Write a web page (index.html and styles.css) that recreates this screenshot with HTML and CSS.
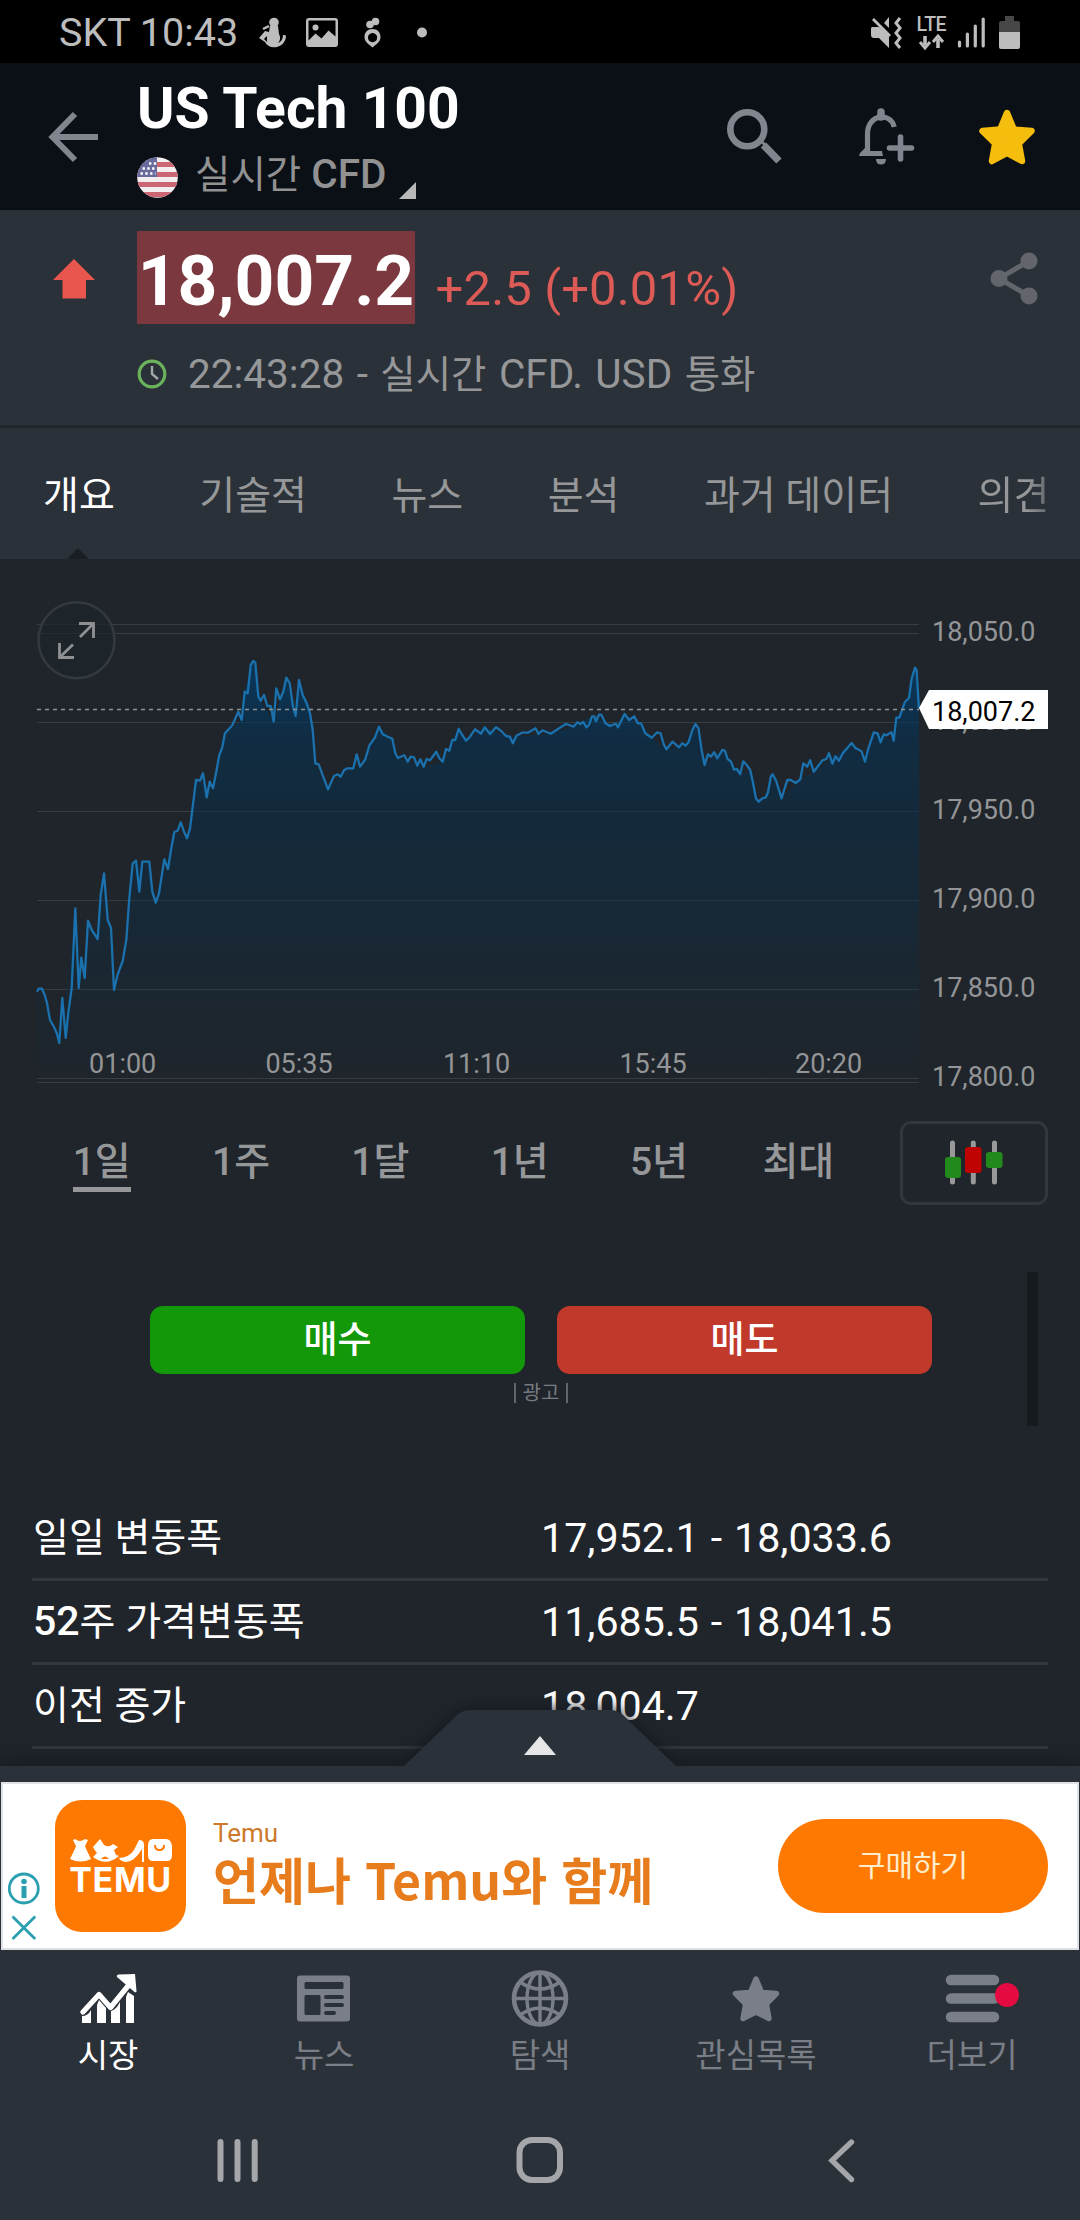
FILE: index.html
```html
<!DOCTYPE html>
<html lang="ko">
<head>
<meta charset="utf-8">
<title>US Tech 100</title>
<link rel="stylesheet" href="styles.css">
</head>
<body>
<div class="statusbar">
  <span class="carrier">SKT 10:43</span>
  <svg class="status-left" viewBox="256 10 176 42" width="176" height="42">
    <g fill="#bdbdbd">
      <circle cx="274" cy="21.500" r="4.800"/>
      <path d="M270 25h8l1 8c2 4 1 7-1 9 3-1 5-4 5-8 2 0 3 0 3 2-1 6-5 9-9 10-6 1-10-1-12-5l-6-4 6-7 4 1z"/>
      <path d="M263 28l6-3" stroke="#bdbdbd" stroke-width="2.500"/>
      <path d="M264 38l3-3v6z" fill="#000"/>
      <path fill-rule="evenodd" d="M309 17h26q3 0 3 3v23q0 3-3 3h-26q-3 0-3-3v-23q0-3 3-3zM308.500 19.500v20l7-7 6 5 7-8 7 6v-16z"/>
      <circle cx="315.500" cy="26.500" r="3"/>
      <circle cx="370" cy="23.500" r="3.800"/><circle cx="375.500" cy="20.500" r="3.800"/>
      <path fill-rule="evenodd" d="M372.500 28c5 0 8 3.500 8 8 0 5-4 7-8 10.500-4-3.500-8-5.500-8-10.500 0-4.500 3-8 8-8zM372.500 32a4.600 4.600 0 1 0 .1 0z"/>
      <circle cx="422" cy="31.500" r="5"/>
    </g>
  </svg>
  <svg class="status-right" viewBox="868 10 156 42" width="156" height="42">
    <g fill="#bdbdbd">
      <path d="M872 26h7l10 8v13l-10-10h-5q-3 0-3-3v-6q0-2 1-2zM884 22l5-6v11z"/>
      <path d="M873 18l17 17" stroke="#bdbdbd" stroke-width="2.800"/>
      <path d="M900 17l-4 5 4 5-4 5 4 5-4 5 4 5" fill="none" stroke="#bdbdbd" stroke-width="3"/>
      <path d="M925 35v9M938 47v-9" stroke="#bdbdbd" stroke-width="3.600"/>
      <path d="M920 41l5 6 5-6M933 41l5-6 5 6" fill="none" stroke="#bdbdbd" stroke-width="3"/>
      <path d="M959.500 41v4M967.400 33v12M975.300 25v20M983.200 18v27" stroke="#bdbdbd" stroke-width="3.200" stroke-linecap="round"/>
      <path fill="#474747" d="M1005 15h9v5h4q2 0 2 2v9h-21v-9q0-2 2-2h4z"/>
      <path d="M999 31h21v15q0 2-2 2h-17q-2 0-2-2z"/>
    </g>
    <text x="916.500" y="30" class="lte">LTE</text>
  </svg>
</div>

<header class="appbar">
  <svg class="back" viewBox="46 108 54 58" width="54" height="58"><path d="M98 137H53M75 114L52.500 137L75 160" fill="none" stroke="#80858e" stroke-width="6"/></svg>
  <div class="heading">
    <h1>US Tech 100</h1>
    <div class="sub">
      <svg class="flag" viewBox="0 0 41 41" width="41" height="41">
        <clipPath id="fc"><circle cx="20.500" cy="20.500" r="20.300"/></clipPath>
        <g clip-path="url(#fc)">
          <path fill="#f3eef0" d="M0 0h41v41H0z"/>
          <path stroke="#cb6673" stroke-width="5" d="M0 7.500h41M0 17.500h41M0 27.500h41M0 37.500h41"/>
          <path fill="#686b9b" d="M0 0h20v20H0z"/>
          <path stroke="#fff" stroke-width="2.400" stroke-dasharray="2.400 2.400" d="M12 6.500h8M5.500 11.500h14M3.500 16.500h15"/>
        </g>
      </svg>
      <span class="cfd"><span class="ko">실시간</span> CFD</span>
      <svg class="corner" viewBox="0 0 17 17" width="17" height="17"><path fill="#b9b9b9" d="M17 0v17H0z"/></svg>
    </div>
  </div>
  <svg class="actions" viewBox="724 104 316 64" width="316" height="64">
    <circle cx="747.300" cy="129.300" r="17" fill="none" stroke="#80858e" stroke-width="6.600"/>
    <path d="M763.500 145L779 161" stroke="#80858e" stroke-width="7.500"/>
    <path d="M761 141l5 5" stroke="#80858e" stroke-width="3"/>
    <g fill="none" stroke="#80858e" stroke-width="5.200">
      <path d="M867.500 153V134C867.500 113.500 891 112 894.200 127"/>
      <path d="M881 112v5" stroke-width="7.500" stroke-linecap="round"/>
      <path d="M900.500 137v22M889.500 148h22" stroke-linecap="round" stroke-width="5.600"/>
    </g>
    <path fill="#80858e" d="M865 148l3 3h14l1 5h-24q0-3 3-5zM876 159h10q0 5.500-5 5.500t-5-5.500z"/>
    <path d="M1007 113L1013.800 129.500 1031.500 131 1018.800 143.500 1022 161 1007 153 992 161 995.200 143.500 982.500 131 1000.200 129.500z" fill="#f5bd0d" stroke="#f5bd0d" stroke-width="6.500" stroke-linejoin="round"/>
  </svg>
</header>

<section class="quote">
  <svg class="up" viewBox="0 0 42 40" width="42" height="40"><path fill="#e8564d" d="M21 0L42 21H33V39.500H9.500V21H0z"/></svg>
  <div class="quote-main">
    <div class="price-line"><span class="price">18,007.2</span><span class="change">+2.5 (+0.01%)</span></div>
    <div class="meta">
      <svg viewBox="0 0 30 30" width="30" height="30"><circle cx="15" cy="15" r="12.800" fill="none" stroke="#6bb25c" stroke-width="3.200"/><path d="M15 7v8l6 5" fill="none" stroke="#a3a8a8" stroke-width="2.400"/></svg>
      <span>22:43:28 - <span class="ko">실시간</span> CFD. USD <span class="ko">통화</span></span>
    </div>
  </div>
  <svg class="share" viewBox="988 252 52 54" width="52" height="54"><g fill="#62666c"><path d="M1028 261L998 278.500 1028 296" fill="none" stroke="#62666c" stroke-width="5"/><circle cx="998" cy="278.500" r="8.500"/><circle cx="1028" cy="261" r="8.500"/><circle cx="1028" cy="296" r="8.500"/></g></svg>
</section>

<nav class="tabs">
  <span class="active">개요</span><span>기술적</span><span>뉴스</span><span>분석</span><span>과거 데이터</span><span>의견</span>
</nav>

<svg class="chart" viewBox="0 559 1080 541" width="1080" height="541">
  <defs>
    <linearGradient id="area" gradientUnits="userSpaceOnUse" x1="0" y1="661" x2="0" y2="1078">
      <stop offset="0" stop-color="#003e6e" stop-opacity=".75"/>
      <stop offset=".2" stop-color="#08304f" stop-opacity=".62"/>
      <stop offset=".6" stop-color="#0c2c44" stop-opacity=".42"/>
      <stop offset="1" stop-color="#0c2c44" stop-opacity="0"/>
    </linearGradient>
  </defs>
  <path class="grid" d="M37 624.500H919M37 633.500H919M37 722.500H919M37 811.500H919M37 900.500H919M37 989.500H919M37 1078.500H919M37 1082.500H919"/>
  <path fill="url(#area)" d="M37 1078V991.700L42 988.700L59.300 1043L75.300 908.300L84.700 978L88 920.700L97.700 939L104 873.300L114 990L122.700 961L126.300 940L132.700 863.300L149.300 861.700L155.700 902.700L174.300 832L187 838.300L192.700 806.700L196 780L213 788.300L225 733.300L241.700 720L244.700 691.700L253.300 661L258.300 696.700L273.700 721.700L286.300 677.700L295.700 716L299 680L310 713.300L315.300 763.300L328 789.300L344 770.300L360 766.700L379 726.700L392.300 738.700L398 758L423.700 766.700L442.700 761.700L458.700 728.700L466 740.700L484.700 727.300L509.800 736.700L550.800 733.700L573.400 726.700L592 716.300L618 727.300L624.600 714L637.700 723.300L651.800 737.700L666.400 749.300L685.500 745.700L695.400 724L704.600 765L722.600 749.700L740.200 774L750.200 770L758.600 801.700L765.800 797.300L772.700 774.300L781.500 798.300L800.300 779.300L813.700 771.700L851.600 743L865 761.700L873.800 732.300L893.700 740.700L896.300 717.700L909 698L915 667.700L918.900 708.300V1078z"/>
  <path class="line" d="M37 991.700L38.700 988.700 42 988.700 44.700 995 47 1003 50 1020 54 1027 56.700 1033 59.300 1043 62.300 998 65.700 1038 68.300 1013 71.700 988 75.300 908.300 78.700 988 81.300 957.700 84.700 978 88 920.700 91.700 930 97.700 939 100.700 895 104 873.300 107.700 920 111 928 114 990 117.700 974.300 122.700 961 126.300 940 129.300 898.300 132.700 863.300 136 860.700 139.300 891.700 142.300 861.700 149.300 861.700 152.300 891.700 155.700 902.700 159 893.300 164.300 859.300 168 869 171 850 174.300 832 177.700 830.700 180.700 822.300 184 831.700 187 838.300 190 828.300 192.700 806.700 196 780 200 780.700 203 773.300 206.700 797.300 209.700 781.700 213 788.300 216 773.300 219.300 755 222 748.300 225 733.300 232.300 725.300 238.300 711.700 241.700 720 244.700 691.700 247.700 693.300 250.700 665 253.300 661 255.300 662.700 258.300 696.700 260.700 700.700 264 695 267.300 706 270.700 706 273.700 721.700 276.300 688.300 280 699.300 283.300 691.700 286.300 677.700 289.700 683.300 293 706.700 295.700 716 299 680 302.700 695 306.700 703.300 310 713.300 312.700 730 315.300 763.300 318.700 764.300 322 773.300 328 789.300 334 776 337.700 774.300 340.700 776.700 344 770.300 347.300 768.300 353.300 768.300 356.700 754.300 360 766.700 365.300 759.300 369.300 745.700 375 737.300 379 726.700 382.700 734.300 387.700 736.700 392.300 738.700 395.300 753.300 398 758 404.300 755.300 407.700 761.700 410.700 756.700 414 757.300 417.300 765.700 420.300 759.300 423.700 766.700 426.700 759 430 760.300 436.300 751.700 439.300 758.300 442.700 761.700 446 749 449.300 750.700 452.300 740 455.300 740 458.700 728.700 462 734.700 466 740.700 470 736.700 475 729.300 481 733.700 484.700 727.300 490 734 496 727.300 501 730.700 506 736 509.800 736.700 512.900 743.300 516.400 735.700 522 732.700 527.800 732.700 535.500 728.300 538.500 734 542.400 730.300 550.800 733.700 558.400 728.700 566 724 573.400 726.700 577.600 722.300 580.300 724 583.300 722 586.400 727.300 589 725 592 716.300 594.400 716.300 596 721.300 599 714.700 601.300 714.700 605.500 723.300 610 726 615.800 723.700 618 727.300 624.600 714 629.200 720 634.200 716.300 637.700 723.300 641 723.300 645.300 733.300 651.800 737.700 657.200 732.300 660.600 733.300 663.700 744.300 666.400 749.300 672.500 741.700 679 747.300 682.400 743.300 685.500 745.700 688.500 742.300 692.400 730 695.400 724 698.500 728.300 701.600 750 704.600 765 708 754.300 711 756.700 714.200 752.300 717.200 758.300 722.600 749.700 724.900 750.700 727.600 759 731 761.700 734 769.700 736.800 769 740.200 774 743.300 761.300 746.700 765 750.200 770 752.800 781.700 755.900 798.300 758.600 801.700 762.400 798.300 765.800 797.300 768 792.300 770.800 776.700 772.700 774.300 776.200 781 781.500 798.300 787.300 780 790.700 780 795.700 783 800.300 779.300 803.300 763.300 807.200 766.700 810.200 760.300 813.700 771.700 822.500 760.300 826.300 759 829 753.300 832.400 763.700 835.500 756.300 838.900 760.700 842.800 753.300 851.600 743 855.400 748 861.500 751.300 865 761.700 868.400 748.300 873.800 732.300 877.600 733.300 880.600 742.300 883.700 734.300 886.400 735.300 891.400 732.300 893.700 740.700 896.300 717.700 899.400 717.700 904.800 702 909 698 911.600 679 915 667.700 916.600 670 918.900 708.300"/>
  <path d="M37 709.500H919" stroke="#8f9295" stroke-width="1.300" stroke-dasharray="4 4"/>
  <g class="axis">
    <text x="932" y="641">18,050.0</text>
    <text x="932" y="730">18,000.0</text>
    <text x="932" y="819">17,950.0</text>
    <text x="932" y="908">17,900.0</text>
    <text x="932" y="997">17,850.0</text>
    <text x="932" y="1086">17,800.0</text>
    <g text-anchor="middle">
      <text x="122.700" y="1073">01:00</text>
      <text x="299" y="1073">05:35</text>
      <text x="476.500" y="1073">11:10</text>
      <text x="653" y="1073">15:45</text>
      <text x="828.600" y="1073">20:20</text>
    </g>
  </g>
  <path fill="#fff" d="M919 708L929 690H1048V729H929z"/>
  <text class="tag" x="932" y="721">18,007.2</text>
  <circle cx="76.500" cy="640.300" r="38" fill="#1f252b" fill-opacity=".75" stroke="#343840" stroke-width="2.600"/>
  <path d="M79 623.500H93.500V638M93.500 623.500L80 637M59.500 643V657.500H74M59.500 657.500L73 644.500" fill="none" stroke="#8f9092" stroke-width="2.800"/>
</svg>

<div class="periods">
  <div class="period-list">
    <span><b>1일</b></span><span>1주</span><span>1달</span><span>1년</span><span>5년</span><span>최대</span>
  </div>
  <div class="candle-btn">
    <svg viewBox="944 1140 60 46" width="60" height="46">
      <path d="M952.500 1143v39M973.300 1143v39M994.500 1143v39" stroke="#999" stroke-width="5" stroke-linecap="round"/>
      <rect x="945" y="1157" width="16" height="21" rx="3" fill="#228a1d"/><rect x="965" y="1147" width="16.500" height="26" rx="3" fill="#bf0303"/><rect x="986" y="1152" width="16.500" height="16" rx="3" fill="#228a1d"/>
    </svg>
  </div>
</div>

<section class="trade">
  <div class="trade-body">
    <div class="trade-buttons"><span class="buy">매수</span><span class="sell">매도</span></div>
    <div class="sponsored"><i></i><span>광고</span><i></i></div>
  </div>
  <div class="thumb"></div>
</section>

<section class="facts">
  <div class="fact"><span>일일 변동폭</span><span class="num">17,952.1 - 18,033.6</span></div>
  <div class="fact"><span><b>52</b>주 가격변동폭</span><span class="num">11,685.5 - 18,041.5</span></div>
  <div class="fact"><span>이전 종가</span><span class="num">18,004.7</span></div>
</section>

<footer class="bottom">
  <svg class="handle" viewBox="380 1690 320 77" width="320" height="77">
    <path d="M403 1767L457 1715Q463 1710 470 1710H610Q617 1710 623 1715L677 1767z" fill="#2b3138"/>
    <path d="M540 1736L556 1755H524z" fill="#e6e6e6"/>
  </svg>
  <div class="ad">
    <svg class="adinfo" viewBox="6 1870 34 74" width="34" height="74">
      <g fill="none" stroke="#2b9fb0" stroke-width="2.800"><circle cx="23.800" cy="1888.500" r="14.500"/><path d="M12.500 1916.500L35.200 1939M35.200 1916.500L12.500 1939"/></g>
      <path d="M21.500 1886h5v12h-5z" fill="#2b9fb0"/><circle cx="24" cy="1881.500" r="2.800" fill="#2b9fb0"/>
    </svg>
    <div class="temu">
      <svg viewBox="69 1838 104 24" width="104" height="24">
        <g fill="#fff">
          <path d="M75 1839q5 4 10 0l3 1-3 6q1 3 6 13-10 5-21 0 5-10 6-13l-3-6z"/>
          <path d="M93 1847l7-8 4 6q5 3 9-1l5 3-4 3 2 5 3 1q-13 11-26 1l4-4-3-4zM101 1859q4-5 8 0z" fill-rule="evenodd"/>
          <path d="M119 1858q11-1 15-8l5-10q5 0 5 5v17h-2v-13q-8 13-16 13-6-1-7-4z"/>
          <path fill-rule="evenodd" d="M153 1839h13q5 0 6 7v9q0 6-5 6h-14q-5 0-5-6v-9q0-7 5-7zM154 1845q0 6 5.500 6t5.500-6h-2q0 4-3.500 4t-3.500-4z"/>
        </g>
      </svg>
      <strong>TEMU</strong>
    </div>
    <div class="adcopy"><small>Temu</small><p>언제나 Temu와 함께</p></div>
    <span class="cta">구매하기</span>
  </div>
  <nav class="nav">
    <div class="item on">
      <svg viewBox="-30 0 60 60" width="60" height="60"><path d="M-25 42L-9 24.500 2.500 37.500 20 16" fill="none" stroke="#fff" stroke-width="5.200" stroke-linecap="round" stroke-linejoin="round"/><path fill="#fff" d="M9 7q-1-2 2-2.500l16-.5 1.500 17q0 2-2 1l-7-6zM-26 46q6 0 9-6v13h-9zM-11 35l2-5 7 8v15h-9zM3 41q5-1 9-9v21h-9zM18 27l2-5 6 4v27h-8z"/></svg>
      <span>시장</span>
    </div>
    <div class="item">
      <svg viewBox="-30 0 60 60" width="60" height="60"><path fill="#7a7e86" fill-rule="evenodd" d="M-24 5.500h47q3 0 3 3v40q0 3-3 3h-47q-3 0-3-3v-40q0-3 3-3zM-18 12q-1.500 0-1.500 1.500v4q0 1.500 1.500 1.500h36q1.500 0 1.500-1.500v-4q0-1.500-1.500-1.500zM-18 25q-1.500 0-1.500 1.500v17q0 1.500 1.500 1.500h13q1.500 0 1.500-1.500v-17q0-1.500-1.500-1.500zM2 25q-2 0-2 2t2 2h16q2 0 2-2t-2-2zM2 33q-2 0-2 2t2 2h16q2 0 2-2t-2-2zM2 41q-2 0-2 2t2 2h8q2 0 2-2t-2-2z"/></svg>
      <span>뉴스</span>
    </div>
    <div class="item">
      <svg viewBox="-30 0 60 60" width="60" height="60"><g fill="none" stroke="#7a7e86" stroke-width="3.400"><circle cx="0" cy="28.500" r="26" stroke-width="4.600"/><ellipse cx="0" cy="28.500" rx="13" ry="26"/><path d="M0 2v53M-26 28.500h52M-20 12q20 14 40 0M-20 45q20-14 40 0"/></g></svg>
      <span>탐색</span>
    </div>
    <div class="item">
      <svg viewBox="-30 0 60 60" width="60" height="60"><path d="M0 9L5.600 22.500 20.500 23.500 10.300 34 13 48.500 0 42-13 48.500-10.300 34-20.500 23.500-5.600 22.500z" fill="#7a7e86" stroke="#7a7e86" stroke-width="5.500" stroke-linejoin="round"/></svg>
      <span>관심목록</span>
    </div>
    <div class="item">
      <svg viewBox="-30 0 80 60" width="80" height="60" class="more"><path d="M-21 10h43M-21 28.500h43M-21 47h43" stroke="#7a7e86" stroke-width="10.500" stroke-linecap="round"/><circle cx="35" cy="25" r="12" fill="#e30b41"/></svg>
      <span>더보기</span>
    </div>
  </nav>
  <div class="system">
    <svg viewBox="0 2130 1080 60" width="1080" height="60"><g fill="none" stroke="#a4a6aa" stroke-width="6" stroke-linecap="round"><path d="M220.500 2142v37M237.500 2142v37M254.700 2142v37"/><rect x="519.500" y="2140" width="40.500" height="40" rx="12.500"/><path d="M851.500 2142L832 2160.500 851.500 2179.500" stroke-width="5.400"/></g></svg>
  </div>
</footer>
</body>
</html>
```
FILE: styles.css
```css
* { box-sizing: border-box; }
body {
  margin: 0;
  width: 1080px;
  height: 2220px;
  overflow: hidden;
  display: flex;
  flex-direction: column;
  background: #1f252b;
  color: #969799;
  font-family: Roboto, "Noto Sans CJK KR", sans-serif;
  font-size: 39px;
  line-height: 48px;
}
svg { display: block; flex: none; }
.ko { font-size: .95em; line-height: 1; }

.statusbar { height: 63px; background: #000; display: flex; align-items: center; padding: 0 56px 0 59px; color: #bdbdbd; }
.carrier { width: 197px; white-space: nowrap; padding-top: 2px; font-size: 39.500px; }
.status-right { margin-left: auto; }
.lte { font-size: 19.500px; font-weight: 500; fill: #bdbdbd; letter-spacing: -.5px; }

.appbar { height: 147px; background: #0b1017; display: flex; padding: 0 40px 0 46px; }
.back { margin-top: 45px; }
.heading { margin-left: 37px; padding-top: 14px; }
.heading h1 { margin: 0; font-size: 57px; line-height: 64px; font-weight: 700; color: #fff; white-space: nowrap; }
.sub { display: flex; margin-top: 8px; height: 50px; }
.flag { margin-top: 8px; }
.cfd { margin-left: 17px; font-size: 40.500px; font-weight: 500; line-height: 50px; white-space: nowrap; color: #929292; }
.cfd .ko { font-weight: 400; }
.corner { margin: 33px 0 0 13px; }
.actions { margin: 41px 0 0 auto; }

.quote { height: 218px; flex: none; background: #2b3138; border-bottom: 3px solid #20262c; display: flex; padding: 21px 39px 0 53px; }
.up { margin-top: 28px; }
.quote-main { margin-left: 42px; white-space: nowrap; }
.price-line { display: flex; align-items: baseline; }
.price { background: #7b393f; color: #fff; font-weight: 700; font-size: 69.500px; line-height: 85px; padding: 8px 0 0; width: 278px; text-align: center; }
.change { margin-left: 20.500px; color: #dc5b57; font-size: 49px; letter-spacing: .15px; }
.meta { display: flex; align-items: center; gap: 21px; margin-top: 26px; font-size: 40.500px; word-spacing: 2.400px; }
.share { margin: 21px 0 0 auto; }

.tabs { position: relative; height: 131px; background: #2b3138; display: flex; gap: 84.500px; align-items: center; padding: 4px 32px 0 43px; white-space: nowrap; overflow: hidden; }
.tabs span:last-child { -webkit-mask-image: linear-gradient(90deg, #000 70%, rgba(0,0,0,.5)); mask-image: linear-gradient(90deg, #000 70%, rgba(0,0,0,.5)); }
.tabs .active { color: #fff; }
.tabs::after { content: ""; position: absolute; left: 67px; bottom: 0; border: 11px solid transparent; border-top: 0; border-bottom-color: #1a1e24; }

.grid { stroke: #363d43; stroke-width: 1.200; fill: none; }
.line { fill: none; stroke: #1a71ad; stroke-width: 2.300; stroke-linejoin: round; }
.axis text { font-size: 27px; fill: #949597; }
.tag { font-size: 27px; fill: #000; }

.periods { display: flex; height: 105px; padding: 21px 32px 0; }
.period-list { width: 836px; display: flex; }
.period-list span { flex: 1; text-align: center; line-height: 48px; padding-top: 17px; font-weight: 500; }
.period-list b { display: inline-block; height: 54px; border-bottom: 5px solid #969799; font-weight: 500; }
.candle-btn { width: 148px; margin-left: 32px; height: 84px; border: 3px solid #32373e; border-radius: 11px; display: flex; align-items: center; justify-content: center; }

.trade { display: flex; margin: 67px 42px 0 150px; height: 154px; justify-content: space-between; }
.trade-body { width: 782px; padding-top: 34px; }
.trade-buttons { display: flex; gap: 32px; }
.trade-buttons span { flex: 1; height: 68px; line-height: 70px; border-radius: 13px; text-align: center; color: #fff; font-size: 37px; font-weight: 500; }
.buy { background: #139809; }
.sell { background: #c0392b; }
.sponsored { display: flex; justify-content: center; align-items: center; gap: 7px; font-size: 20px; line-height: 20px; margin-top: 9px; color: #777b80; }
.sponsored i { width: 2px; height: 20px; background: #62666b; }
.thumb { width: 11px; background: #16191e; }

.facts { margin: 71px 32px 0; }
.fact { display: grid; grid-template-columns: 508px 1fr; height: 84px; border-bottom: 3px solid #31373f; color: #fff; line-height: 83px; padding-left: 1px; white-space: nowrap; }
.fact b { font-size: 41px; font-weight: 500; line-height: 1; }
.num { font-size: 41.200px; word-spacing: 1.700px; }

.bottom { position: relative; margin-top: 17px; flex: 1; background: #2b3138; padding-top: 16px; box-shadow: 0 0 20px rgba(18, 20, 28, .9); }
.handle { position: absolute; left: 380px; top: -76px; filter: drop-shadow(0 -3px 7px rgba(18, 20, 28, .7)); clip-path: inset(0 0 0 0); }
.ad { margin: 0 1px; height: 168px; background: #fff; border: 2px solid #dfe1e4; display: flex; align-items: center; padding: 0 29px 0 3px; }
.adinfo { align-self: flex-end; margin-bottom: 4px; }
.temu { margin-left: 15px; width: 131px; height: 132px; border-radius: 27px; background: #fd7902; color: #fff; display: flex; flex-direction: column; align-items: center; padding-top: 38px; }
.temu strong { font: 700 34px/34px Inter, sans-serif; letter-spacing: .7px; margin-top: 1px; }
.adcopy { margin-left: 27px; padding-bottom: 7px; color: #e77c1d; white-space: nowrap; }
.adcopy small { display: block; font-size: 26px; line-height: 30px; color: #cd7a2b; }
.adcopy p { margin: 0; font-family: "Noto Sans CJK KR", sans-serif; font-weight: 700; font-size: 50px; line-height: 60px; }
.cta { margin-left: auto; width: 270px; height: 94px; line-height: 94px; border-radius: 47px; background: #fd7902; color: #ffeccb; text-align: center; font-size: 30px; }
.nav { display: flex; padding-top: 20px; height: 168px; }
.item { width: 216px; display: flex; flex-direction: column; align-items: center; color: #7a7e86; font-size: 33px; line-height: 40px; gap: 5.500px; }
.on { color: #fff; }
.more { margin-left: 20px; }
.system { padding-top: 12px; }
```
